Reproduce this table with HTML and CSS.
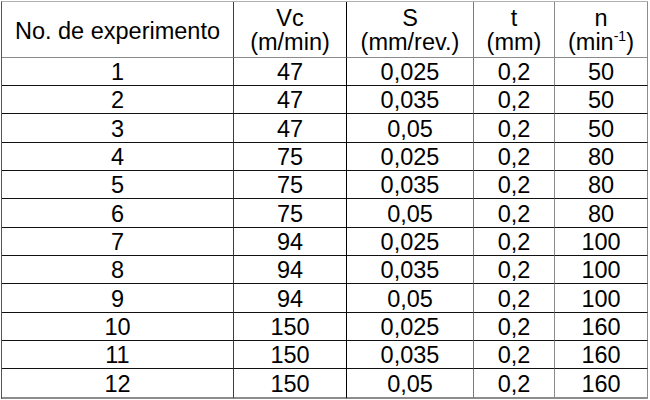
FILE: index.html
```html
<!DOCTYPE html>
<html>
<head>
<meta charset="utf-8">
<link rel="stylesheet" href="styles.css">
</head>
<body>
<div class="table">
  <div class="cell head c1 first">No. de experimento</div>
  <div class="cell head c2"><span class="ln">Vc</span><span class="ln">(m/min)</span></div>
  <div class="cell head c3"><span class="ln">S</span><span class="ln">(mm/rev.)</span></div>
  <div class="cell head c4"><span class="ln">t</span><span class="ln">(mm)</span></div>
  <div class="cell head c5"><span class="ln">n</span><span class="ln">(min<sup>-1</sup>)</span></div>

  <div class="cell c1">1</div><div class="cell c2">47</div><div class="cell c3">0,025</div><div class="cell c4">0,2</div><div class="cell c5">50</div>
  <div class="cell c1">2</div><div class="cell c2">47</div><div class="cell c3">0,035</div><div class="cell c4">0,2</div><div class="cell c5">50</div>
  <div class="cell c1">3</div><div class="cell c2">47</div><div class="cell c3">0,05</div><div class="cell c4">0,2</div><div class="cell c5">50</div>
  <div class="cell c1">4</div><div class="cell c2">75</div><div class="cell c3">0,025</div><div class="cell c4">0,2</div><div class="cell c5">80</div>
  <div class="cell c1">5</div><div class="cell c2">75</div><div class="cell c3">0,035</div><div class="cell c4">0,2</div><div class="cell c5">80</div>
  <div class="cell c1">6</div><div class="cell c2">75</div><div class="cell c3">0,05</div><div class="cell c4">0,2</div><div class="cell c5">80</div>
  <div class="cell c1">7</div><div class="cell c2">94</div><div class="cell c3">0,025</div><div class="cell c4">0,2</div><div class="cell c5">100</div>
  <div class="cell c1">8</div><div class="cell c2">94</div><div class="cell c3">0,035</div><div class="cell c4">0,2</div><div class="cell c5">100</div>
  <div class="cell c1">9</div><div class="cell c2">94</div><div class="cell c3">0,05</div><div class="cell c4">0,2</div><div class="cell c5">100</div>
  <div class="cell c1">10</div><div class="cell c2">150</div><div class="cell c3">0,025</div><div class="cell c4">0,2</div><div class="cell c5">160</div>
  <div class="cell c1">11</div><div class="cell c2">150</div><div class="cell c3">0,035</div><div class="cell c4">0,2</div><div class="cell c5">160</div>
  <div class="cell c1 last">12</div><div class="cell c2 last">150</div><div class="cell c3 last">0,05</div><div class="cell c4 last">0,2</div><div class="cell c5 last">160</div>
</div>
</body>
</html>
```

FILE: styles.css
```css
html, body {
  margin: 0;
  padding: 0;
  background: #ffffff;
}

body {
  padding: 1px 0 0 1px;
  font-family: "Liberation Sans", Arial, sans-serif;
  color: #000;
}

.table {
  display: grid;
  width: 647px;
  box-sizing: border-box;
  grid-template-columns: 232px 113px 127px 81px 93px;
  grid-template-rows: 56px 28px 28px 29px 28px 28px 29px 28px 28px 29px 28px 28px 30px;
  border-left: 1px solid #555;
  border-top: 1px solid #b0b0b0;
}

.cell {
  box-sizing: border-box;
  display: flex;
  align-items: center;
  justify-content: center;
  text-align: center;
  font-size: 23.5px;
  line-height: 26px;
  padding-top: 1px;
  border-bottom: 1px solid #111;
  border-right: 1px solid #808080;
}

.c1 { border-right-color: #3c3c3c; }
.c2 { border-right-color: #000; }
.c3 { border-right-color: #7a7a7a; }
.c4 { border-right-color: #8a8a8a; }
.c5 { border-right-color: #8c8c8c; }

.head {
  flex-direction: column;
  line-height: 24px;
  border-bottom-color: #8a8a8a;
  padding-top: 0;
}

.head .ln {
  display: block;
}

.head.first {
  padding-top: 2px;
}

.last {
  border-bottom: 2px solid #8c8c8c;
}

sup {
  font-size: 14px;
  line-height: 0;
  vertical-align: 9px;
}
```
